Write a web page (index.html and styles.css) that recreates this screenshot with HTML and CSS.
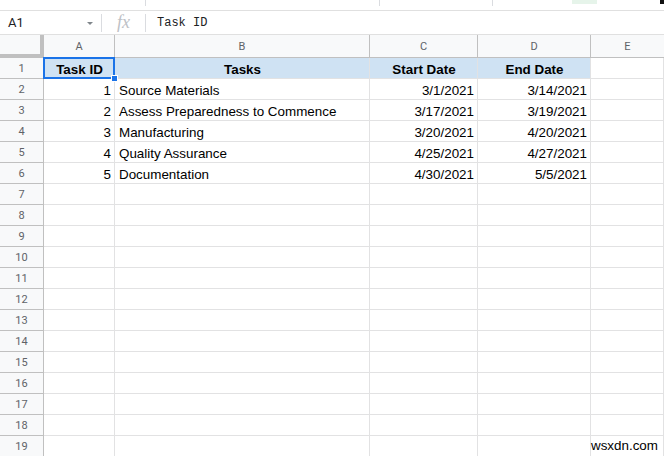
FILE: index.html
```html
<!DOCTYPE html>
<html>
<head>
<meta charset="utf-8">
<link rel="stylesheet" href="styles.css">
</head>
<body>
<div class="app">
  <div class="topstrip">
    <span class="tdiv d1"></span>
    <span class="tdiv d2"></span>
    <span class="tdiv d3"></span>
    <span class="tgreen"></span>
    <span class="tblack"></span>
  </div>
  <div class="fbar">
    <div class="namebox"><span class="ref">A1</span><span class="caret"></span></div>
    <div class="fx">fx</div>
    <div class="formula">Task ID</div>
  </div>
  <div class="grid">
    <div class="corner"></div>
    <div class="ch">A</div>
    <div class="ch">B</div>
    <div class="ch">C</div>
    <div class="ch">D</div>
    <div class="ch last">E</div>

    <div class="rh">1</div>
    <div class="c hd sel">Task ID<span class="handle"></span></div>
    <div class="c hd">Tasks</div>
    <div class="c hd">Start Date</div>
    <div class="c hd">End Date</div>
    <div class="c"></div>

    <div class="rh">2</div>
    <div class="c num">1</div>
    <div class="c">Source Materials</div>
    <div class="c num">3/1/2021</div>
    <div class="c num">3/14/2021</div>
    <div class="c"></div>

    <div class="rh">3</div>
    <div class="c num">2</div>
    <div class="c">Assess Preparedness to Commence</div>
    <div class="c num">3/17/2021</div>
    <div class="c num">3/19/2021</div>
    <div class="c"></div>

    <div class="rh">4</div>
    <div class="c num">3</div>
    <div class="c">Manufacturing</div>
    <div class="c num">3/20/2021</div>
    <div class="c num">4/20/2021</div>
    <div class="c"></div>

    <div class="rh">5</div>
    <div class="c num">4</div>
    <div class="c">Quality Assurance</div>
    <div class="c num">4/25/2021</div>
    <div class="c num">4/27/2021</div>
    <div class="c"></div>

    <div class="rh">6</div>
    <div class="c num">5</div>
    <div class="c">Documentation</div>
    <div class="c num">4/30/2021</div>
    <div class="c num">5/5/2021</div>
    <div class="c"></div>

    <div class="rh">7</div><div class="c"></div><div class="c"></div><div class="c"></div><div class="c"></div><div class="c"></div>
    <div class="rh">8</div><div class="c"></div><div class="c"></div><div class="c"></div><div class="c"></div><div class="c"></div>
    <div class="rh">9</div><div class="c"></div><div class="c"></div><div class="c"></div><div class="c"></div><div class="c"></div>
    <div class="rh">10</div><div class="c"></div><div class="c"></div><div class="c"></div><div class="c"></div><div class="c"></div>
    <div class="rh">11</div><div class="c"></div><div class="c"></div><div class="c"></div><div class="c"></div><div class="c"></div>
    <div class="rh">12</div><div class="c"></div><div class="c"></div><div class="c"></div><div class="c"></div><div class="c"></div>
    <div class="rh">13</div><div class="c"></div><div class="c"></div><div class="c"></div><div class="c"></div><div class="c"></div>
    <div class="rh">14</div><div class="c"></div><div class="c"></div><div class="c"></div><div class="c"></div><div class="c"></div>
    <div class="rh">15</div><div class="c"></div><div class="c"></div><div class="c"></div><div class="c"></div><div class="c"></div>
    <div class="rh">16</div><div class="c"></div><div class="c"></div><div class="c"></div><div class="c"></div><div class="c"></div>
    <div class="rh">17</div><div class="c"></div><div class="c"></div><div class="c"></div><div class="c"></div><div class="c"></div>
    <div class="rh">18</div><div class="c"></div><div class="c"></div><div class="c"></div><div class="c"></div><div class="c"></div>
    <div class="rh">19</div><div class="c"></div><div class="c"></div><div class="c"></div><div class="c"></div><div class="c"></div>
  </div>
  <div class="watermark">wsxdn.com</div>
</div>
</body>
</html>
```
FILE: styles.css
```css
* { box-sizing: border-box; }
html, body { margin: 0; padding: 0; background: #fff; }
body { width: 664px; height: 456px; overflow: hidden; font-family: "Liberation Sans", Arial, sans-serif; }
.app { position: relative; width: 664px; height: 456px; overflow: hidden; }

.topstrip { position: relative; height: 11px; border-bottom: 1px solid #e0e0e0; }
.tdiv { position: absolute; top: 0; width: 1px; height: 6px; background: #dadce0; }
.d1 { left: 145px; }
.d2 { left: 379px; }
.d3 { left: 492px; }
.tgreen { position: absolute; top: 0; left: 572px; width: 25px; height: 4px; background: #e6f4ea; }
.tblack { position: absolute; top: 0; left: 660px; width: 4px; height: 4px; background: #111; }

.fbar { display: flex; align-items: center; height: 24px; border-bottom: 1px solid #e0e0e0; }
.namebox { width: 102px; height: 18px; display: flex; align-items: center; justify-content: space-between; padding: 0 8px 0 8px; border-right: 1px solid #dadce0; }
.ref { font-family: Roboto, "Liberation Sans", sans-serif; font-size: 13px; color: #202124; }
.caret { width: 0; height: 0; border-left: 3px solid transparent; border-right: 3px solid transparent; border-top: 3px solid #80868b; margin-top: 1px; }
.fx { width: 44px; height: 18px; display: flex; align-items: center; justify-content: center; font-family: "Liberation Serif", serif; font-style: italic; font-size: 18px; color: #bdc1c6; border-right: 1px solid #dadce0; }
.formula { padding-left: 11px; font-family: "Liberation Mono", monospace; font-size: 12px; color: #202124; }

.grid { display: grid; grid-template-columns: 44px 71px 255px 108px 113px 73px; grid-template-rows: 23px repeat(19, 21px); }
.corner { background: #f8f9fa; border-right: 4px solid #c0c0c0; border-bottom: 4px solid #c0c0c0; }
.ch { background: #f8f9fa; border-right: 1px solid #c0c0c0; border-bottom: 1px solid #c0c0c0; display: flex; align-items: center; justify-content: center; font-family: Roboto, "Liberation Sans", sans-serif; font-size: 11px; color: #5f6368; }
.ch.last { border-right: none; }
.rh { background: #f8f9fa; border-right: 1px solid #c0c0c0; border-bottom: 1px solid #c0c0c0; display: flex; align-items: center; justify-content: center; font-family: Roboto, "Liberation Sans", sans-serif; font-size: 11px; color: #5f6368; }
.c { border-right: 1px solid #e2e2e3; border-bottom: 1px solid #e2e2e3; font-size: 13.4px; color: #000; padding: 2px 3px 0 4px; display: flex; align-items: center; white-space: nowrap; overflow: visible; }
.c.num { justify-content: flex-end; }
.c.hd { background: #cfe2f3; font-weight: bold; justify-content: center; }
.sel { position: relative; }
.sel::after { content: ""; position: absolute; left: -1px; top: -1px; right: -1px; bottom: -1px; border: 2px solid #1a73e8; pointer-events: none; }
.handle { position: absolute; right: -4px; bottom: -4px; width: 7px; height: 7px; background: #1a73e8; border: 1px solid #fff; z-index: 2; }

.watermark { position: absolute; left: 591px; top: 439px; font-size: 13.4px; color: #000; background: #fff; font-family: "Liberation Sans", Arial, sans-serif; line-height: 14px; }
```
